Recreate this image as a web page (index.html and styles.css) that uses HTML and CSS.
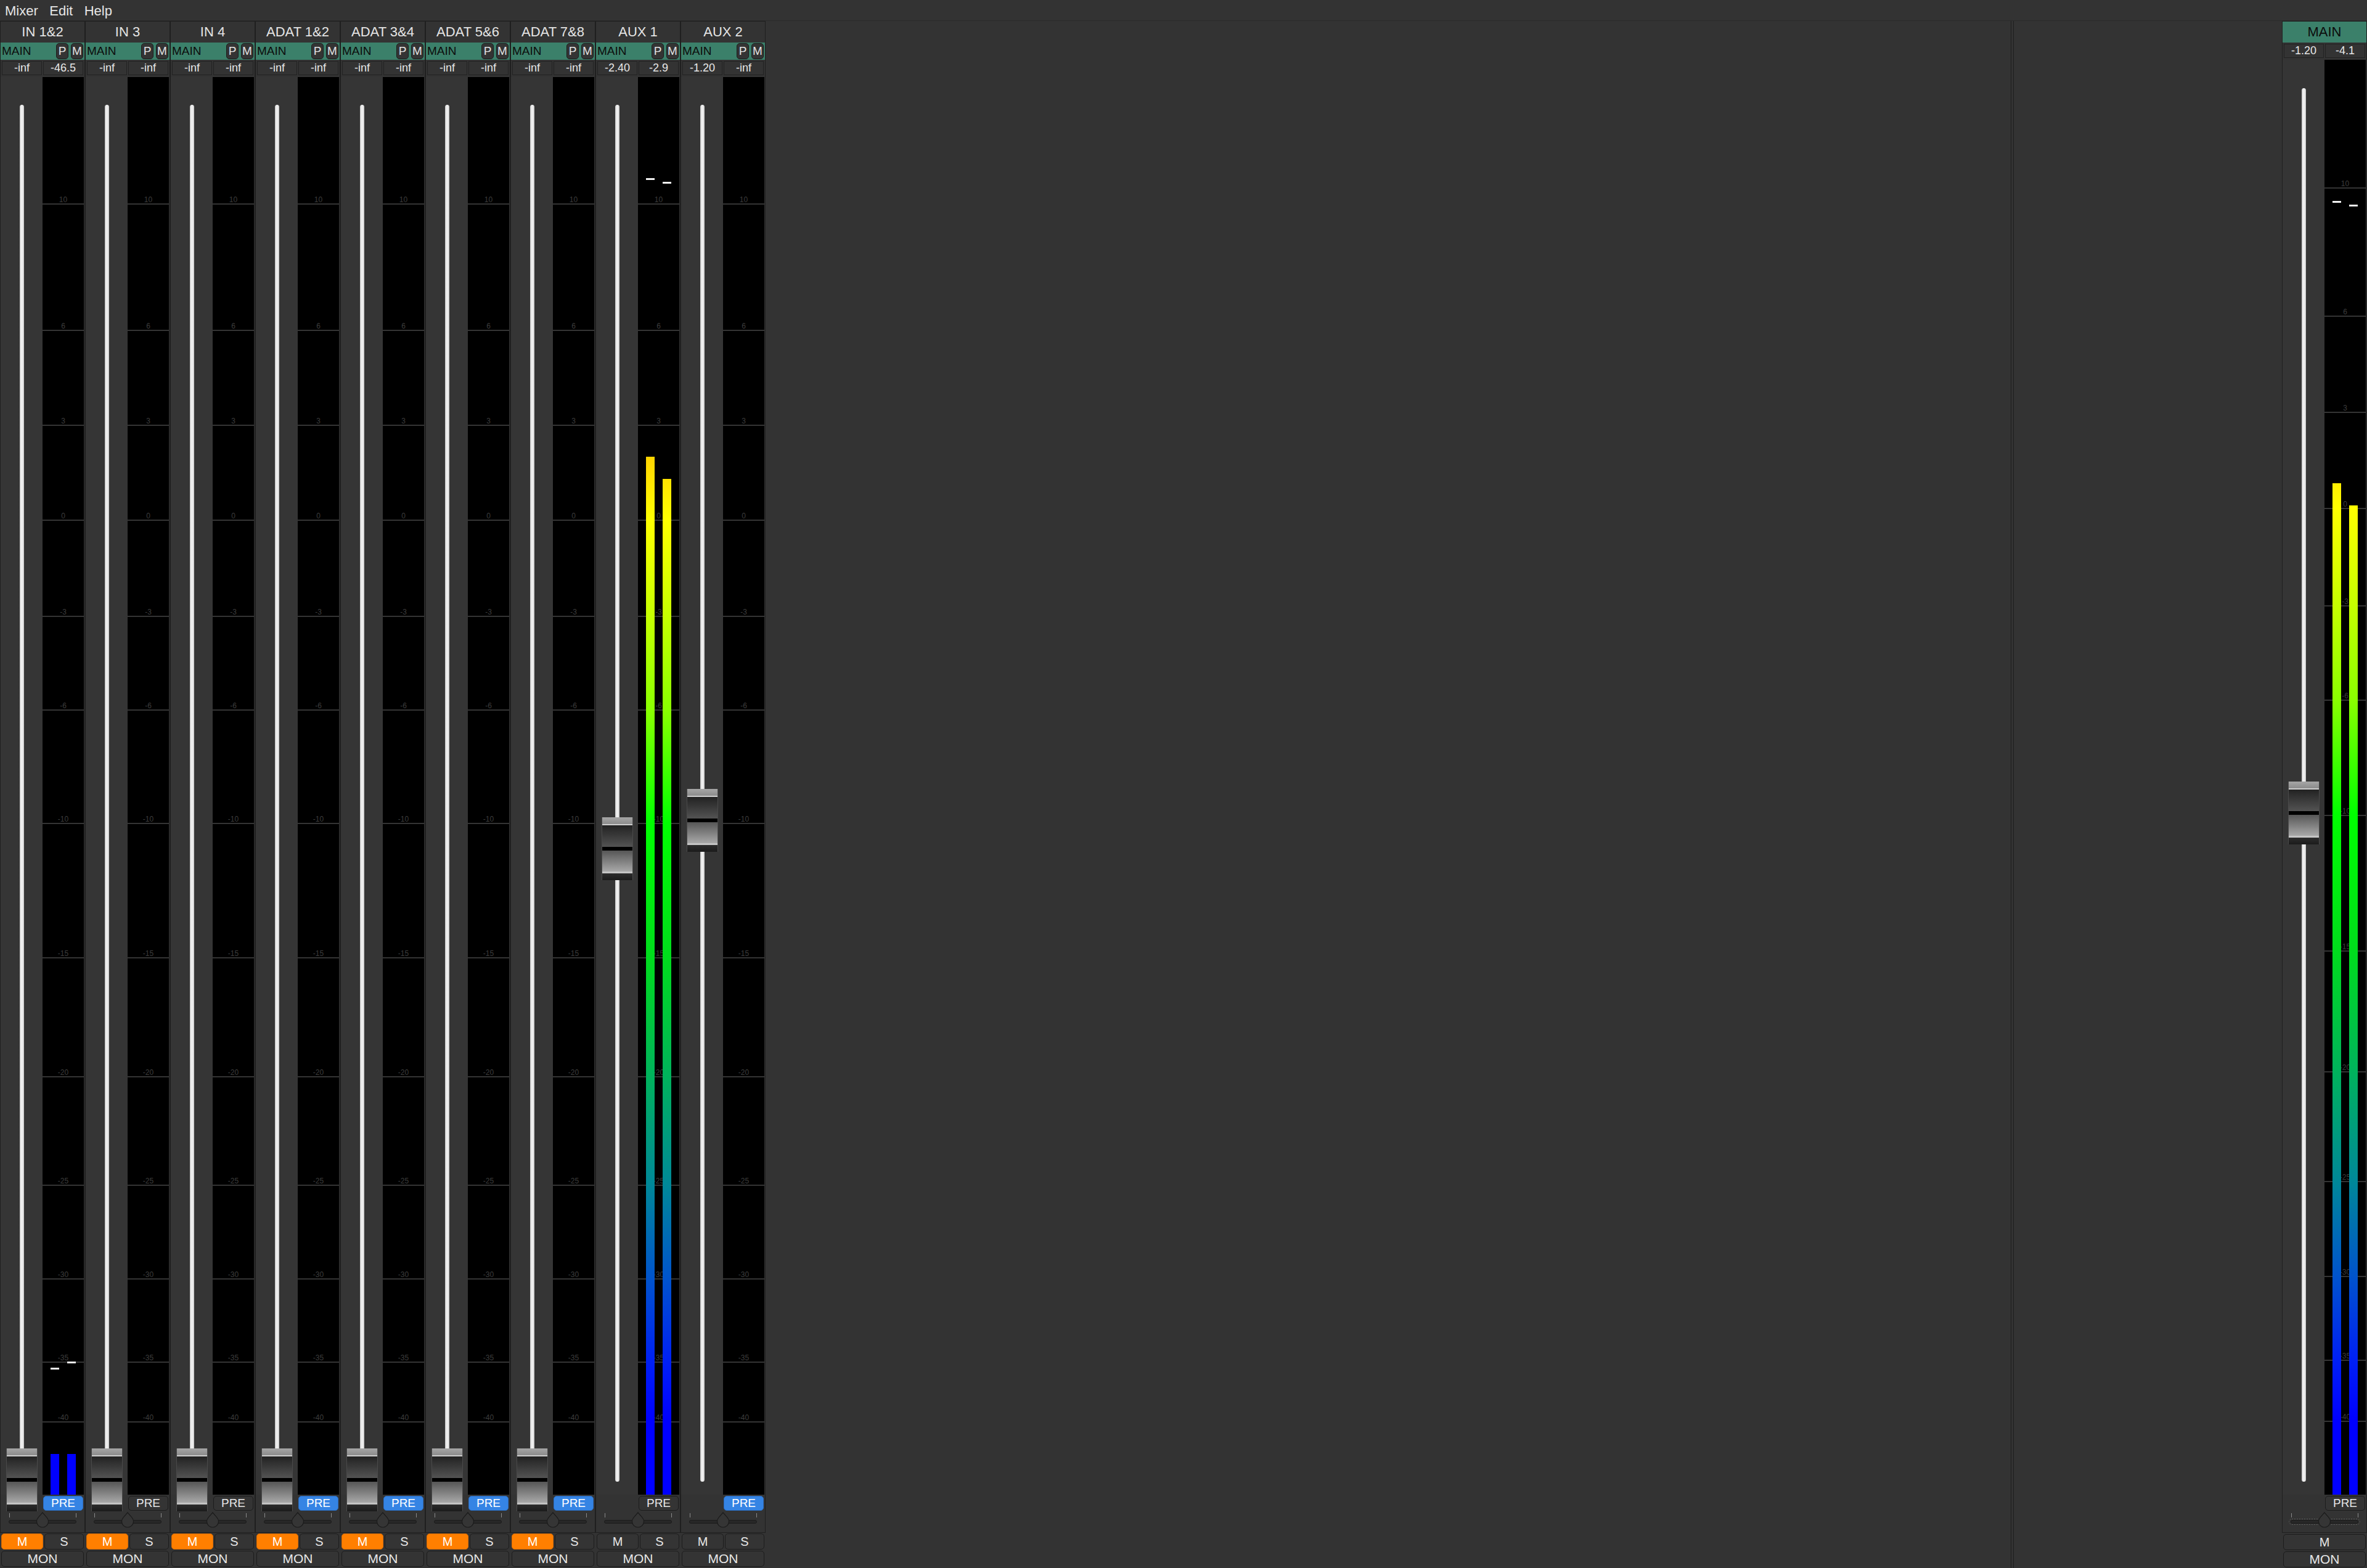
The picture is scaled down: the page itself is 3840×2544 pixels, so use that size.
FILE: index.html
```html
<!DOCTYPE html>
<html>
<head>
<meta charset="utf-8">
<title>Mixer</title>
<link rel="stylesheet" href="styles.css">
</head>
<body>
<div class="menubar"><span>Mixer</span><span>Edit</span><span>Help</span></div>
<div class="mixer">
  <div class="channels">

    <div class="strip">
      <div class="frame">
        <div class="head">IN 1&amp;2</div>
        <div class="route"><span class="dest">MAIN</span><span class="pm">P</span><span class="pm">M</span></div>
        <div class="vals"><span class="val">-inf</span><span class="val">-46.5</span></div>
        <div class="body">
          <div class="fader"><div class="track"></div><div class="handle" style="top:2225px"></div></div>
          <div class="meter">
            <div class="tk k0"><span>10</span></div><div class="tk k1"><span>6</span></div><div class="tk k2"><span>3</span></div><div class="tk k3"><span>0</span></div><div class="tk k4"><span>-3</span></div><div class="tk k5"><span>-6</span></div><div class="tk k6"><span>-10</span></div><div class="tk k7"><span>-15</span></div><div class="tk k8"><span>-20</span></div><div class="tk k9"><span>-25</span></div><div class="tk k10"><span>-30</span></div><div class="tk k11"><span>-35</span></div><div class="tk k12"><span>-40</span></div>
            <div class="bar l" style="height:66px"></div><div class="bar r" style="height:66px"></div>
            <div class="peak l" style="top:2094px"></div><div class="peak r" style="top:2084px"></div>
          </div>
        </div>
        <div class="prerow"><span class="pre on">PRE</span></div>
        <div class="pan"><svg width="136" height="34" viewBox="0 0 136 34"><rect x="14" y="3" width="1" height="7" fill="#8a8a8a"/><rect x="122" y="3" width="1" height="7" fill="#8a8a8a"/><rect x="13.5" y="14.5" width="109" height="5" rx="2.5" fill="#272727" stroke="#1b1b1b"/><path d="M68 2 L75.2 10.3 A9.5 9.5 0 1 1 60.8 10.3 Z" fill="#353535" stroke="#1b1b1b" stroke-width="1.2"/></svg></div>
      </div>
      <div class="ms"><span class="btn mute on">M</span><span class="btn solo">S</span></div>
      <div class="monrow"><span class="btn mon">MON</span></div>
    </div>

    <div class="strip">
      <div class="frame">
        <div class="head">IN 3</div>
        <div class="route"><span class="dest">MAIN</span><span class="pm">P</span><span class="pm">M</span></div>
        <div class="vals"><span class="val">-inf</span><span class="val">-inf</span></div>
        <div class="body">
          <div class="fader"><div class="track"></div><div class="handle" style="top:2225px"></div></div>
          <div class="meter">
            <div class="tk k0"><span>10</span></div><div class="tk k1"><span>6</span></div><div class="tk k2"><span>3</span></div><div class="tk k3"><span>0</span></div><div class="tk k4"><span>-3</span></div><div class="tk k5"><span>-6</span></div><div class="tk k6"><span>-10</span></div><div class="tk k7"><span>-15</span></div><div class="tk k8"><span>-20</span></div><div class="tk k9"><span>-25</span></div><div class="tk k10"><span>-30</span></div><div class="tk k11"><span>-35</span></div><div class="tk k12"><span>-40</span></div>
          </div>
        </div>
        <div class="prerow"><span class="pre">PRE</span></div>
        <div class="pan"><svg width="136" height="34" viewBox="0 0 136 34"><rect x="14" y="3" width="1" height="7" fill="#8a8a8a"/><rect x="122" y="3" width="1" height="7" fill="#8a8a8a"/><rect x="13.5" y="14.5" width="109" height="5" rx="2.5" fill="#272727" stroke="#1b1b1b"/><path d="M68 2 L75.2 10.3 A9.5 9.5 0 1 1 60.8 10.3 Z" fill="#353535" stroke="#1b1b1b" stroke-width="1.2"/></svg></div>
      </div>
      <div class="ms"><span class="btn mute on">M</span><span class="btn solo">S</span></div>
      <div class="monrow"><span class="btn mon">MON</span></div>
    </div>

    <div class="strip">
      <div class="frame">
        <div class="head">IN 4</div>
        <div class="route"><span class="dest">MAIN</span><span class="pm">P</span><span class="pm">M</span></div>
        <div class="vals"><span class="val">-inf</span><span class="val">-inf</span></div>
        <div class="body">
          <div class="fader"><div class="track"></div><div class="handle" style="top:2225px"></div></div>
          <div class="meter">
            <div class="tk k0"><span>10</span></div><div class="tk k1"><span>6</span></div><div class="tk k2"><span>3</span></div><div class="tk k3"><span>0</span></div><div class="tk k4"><span>-3</span></div><div class="tk k5"><span>-6</span></div><div class="tk k6"><span>-10</span></div><div class="tk k7"><span>-15</span></div><div class="tk k8"><span>-20</span></div><div class="tk k9"><span>-25</span></div><div class="tk k10"><span>-30</span></div><div class="tk k11"><span>-35</span></div><div class="tk k12"><span>-40</span></div>
          </div>
        </div>
        <div class="prerow"><span class="pre">PRE</span></div>
        <div class="pan"><svg width="136" height="34" viewBox="0 0 136 34"><rect x="14" y="3" width="1" height="7" fill="#8a8a8a"/><rect x="122" y="3" width="1" height="7" fill="#8a8a8a"/><rect x="13.5" y="14.5" width="109" height="5" rx="2.5" fill="#272727" stroke="#1b1b1b"/><path d="M68 2 L75.2 10.3 A9.5 9.5 0 1 1 60.8 10.3 Z" fill="#353535" stroke="#1b1b1b" stroke-width="1.2"/></svg></div>
      </div>
      <div class="ms"><span class="btn mute on">M</span><span class="btn solo">S</span></div>
      <div class="monrow"><span class="btn mon">MON</span></div>
    </div>

    <div class="strip">
      <div class="frame">
        <div class="head">ADAT 1&amp;2</div>
        <div class="route"><span class="dest">MAIN</span><span class="pm">P</span><span class="pm">M</span></div>
        <div class="vals"><span class="val">-inf</span><span class="val">-inf</span></div>
        <div class="body">
          <div class="fader"><div class="track"></div><div class="handle" style="top:2225px"></div></div>
          <div class="meter">
            <div class="tk k0"><span>10</span></div><div class="tk k1"><span>6</span></div><div class="tk k2"><span>3</span></div><div class="tk k3"><span>0</span></div><div class="tk k4"><span>-3</span></div><div class="tk k5"><span>-6</span></div><div class="tk k6"><span>-10</span></div><div class="tk k7"><span>-15</span></div><div class="tk k8"><span>-20</span></div><div class="tk k9"><span>-25</span></div><div class="tk k10"><span>-30</span></div><div class="tk k11"><span>-35</span></div><div class="tk k12"><span>-40</span></div>
          </div>
        </div>
        <div class="prerow"><span class="pre on">PRE</span></div>
        <div class="pan"><svg width="136" height="34" viewBox="0 0 136 34"><rect x="14" y="3" width="1" height="7" fill="#8a8a8a"/><rect x="122" y="3" width="1" height="7" fill="#8a8a8a"/><rect x="13.5" y="14.5" width="109" height="5" rx="2.5" fill="#272727" stroke="#1b1b1b"/><path d="M68 2 L75.2 10.3 A9.5 9.5 0 1 1 60.8 10.3 Z" fill="#353535" stroke="#1b1b1b" stroke-width="1.2"/></svg></div>
      </div>
      <div class="ms"><span class="btn mute on">M</span><span class="btn solo">S</span></div>
      <div class="monrow"><span class="btn mon">MON</span></div>
    </div>

    <div class="strip">
      <div class="frame">
        <div class="head">ADAT 3&amp;4</div>
        <div class="route"><span class="dest">MAIN</span><span class="pm">P</span><span class="pm">M</span></div>
        <div class="vals"><span class="val">-inf</span><span class="val">-inf</span></div>
        <div class="body">
          <div class="fader"><div class="track"></div><div class="handle" style="top:2225px"></div></div>
          <div class="meter">
            <div class="tk k0"><span>10</span></div><div class="tk k1"><span>6</span></div><div class="tk k2"><span>3</span></div><div class="tk k3"><span>0</span></div><div class="tk k4"><span>-3</span></div><div class="tk k5"><span>-6</span></div><div class="tk k6"><span>-10</span></div><div class="tk k7"><span>-15</span></div><div class="tk k8"><span>-20</span></div><div class="tk k9"><span>-25</span></div><div class="tk k10"><span>-30</span></div><div class="tk k11"><span>-35</span></div><div class="tk k12"><span>-40</span></div>
          </div>
        </div>
        <div class="prerow"><span class="pre on">PRE</span></div>
        <div class="pan"><svg width="136" height="34" viewBox="0 0 136 34"><rect x="14" y="3" width="1" height="7" fill="#8a8a8a"/><rect x="122" y="3" width="1" height="7" fill="#8a8a8a"/><rect x="13.5" y="14.5" width="109" height="5" rx="2.5" fill="#272727" stroke="#1b1b1b"/><path d="M68 2 L75.2 10.3 A9.5 9.5 0 1 1 60.8 10.3 Z" fill="#353535" stroke="#1b1b1b" stroke-width="1.2"/></svg></div>
      </div>
      <div class="ms"><span class="btn mute on">M</span><span class="btn solo">S</span></div>
      <div class="monrow"><span class="btn mon">MON</span></div>
    </div>

    <div class="strip">
      <div class="frame">
        <div class="head">ADAT 5&amp;6</div>
        <div class="route"><span class="dest">MAIN</span><span class="pm">P</span><span class="pm">M</span></div>
        <div class="vals"><span class="val">-inf</span><span class="val">-inf</span></div>
        <div class="body">
          <div class="fader"><div class="track"></div><div class="handle" style="top:2225px"></div></div>
          <div class="meter">
            <div class="tk k0"><span>10</span></div><div class="tk k1"><span>6</span></div><div class="tk k2"><span>3</span></div><div class="tk k3"><span>0</span></div><div class="tk k4"><span>-3</span></div><div class="tk k5"><span>-6</span></div><div class="tk k6"><span>-10</span></div><div class="tk k7"><span>-15</span></div><div class="tk k8"><span>-20</span></div><div class="tk k9"><span>-25</span></div><div class="tk k10"><span>-30</span></div><div class="tk k11"><span>-35</span></div><div class="tk k12"><span>-40</span></div>
          </div>
        </div>
        <div class="prerow"><span class="pre on">PRE</span></div>
        <div class="pan"><svg width="136" height="34" viewBox="0 0 136 34"><rect x="14" y="3" width="1" height="7" fill="#8a8a8a"/><rect x="122" y="3" width="1" height="7" fill="#8a8a8a"/><rect x="13.5" y="14.5" width="109" height="5" rx="2.5" fill="#272727" stroke="#1b1b1b"/><path d="M68 2 L75.2 10.3 A9.5 9.5 0 1 1 60.8 10.3 Z" fill="#353535" stroke="#1b1b1b" stroke-width="1.2"/></svg></div>
      </div>
      <div class="ms"><span class="btn mute on">M</span><span class="btn solo">S</span></div>
      <div class="monrow"><span class="btn mon">MON</span></div>
    </div>

    <div class="strip">
      <div class="frame">
        <div class="head">ADAT 7&amp;8</div>
        <div class="route"><span class="dest">MAIN</span><span class="pm">P</span><span class="pm">M</span></div>
        <div class="vals"><span class="val">-inf</span><span class="val">-inf</span></div>
        <div class="body">
          <div class="fader"><div class="track"></div><div class="handle" style="top:2225px"></div></div>
          <div class="meter">
            <div class="tk k0"><span>10</span></div><div class="tk k1"><span>6</span></div><div class="tk k2"><span>3</span></div><div class="tk k3"><span>0</span></div><div class="tk k4"><span>-3</span></div><div class="tk k5"><span>-6</span></div><div class="tk k6"><span>-10</span></div><div class="tk k7"><span>-15</span></div><div class="tk k8"><span>-20</span></div><div class="tk k9"><span>-25</span></div><div class="tk k10"><span>-30</span></div><div class="tk k11"><span>-35</span></div><div class="tk k12"><span>-40</span></div>
          </div>
        </div>
        <div class="prerow"><span class="pre on">PRE</span></div>
        <div class="pan"><svg width="136" height="34" viewBox="0 0 136 34"><rect x="14" y="3" width="1" height="7" fill="#8a8a8a"/><rect x="122" y="3" width="1" height="7" fill="#8a8a8a"/><rect x="13.5" y="14.5" width="109" height="5" rx="2.5" fill="#272727" stroke="#1b1b1b"/><path d="M68 2 L75.2 10.3 A9.5 9.5 0 1 1 60.8 10.3 Z" fill="#353535" stroke="#1b1b1b" stroke-width="1.2"/></svg></div>
      </div>
      <div class="ms"><span class="btn mute on">M</span><span class="btn solo">S</span></div>
      <div class="monrow"><span class="btn mon">MON</span></div>
    </div>

    <div class="strip">
      <div class="frame">
        <div class="head">AUX 1</div>
        <div class="route"><span class="dest">MAIN</span><span class="pm">P</span><span class="pm">M</span></div>
        <div class="vals"><span class="val">-2.40</span><span class="val">-2.9</span></div>
        <div class="body">
          <div class="fader"><div class="track"></div><div class="handle" style="top:1201px"></div></div>
          <div class="meter">
            <div class="tk k0"><span>10</span></div><div class="tk k1"><span>6</span></div><div class="tk k2"><span>3</span></div><div class="tk k3"><span>0</span></div><div class="tk k4"><span>-3</span></div><div class="tk k5"><span>-6</span></div><div class="tk k6"><span>-10</span></div><div class="tk k7"><span>-15</span></div><div class="tk k8"><span>-20</span></div><div class="tk k9"><span>-25</span></div><div class="tk k10"><span>-30</span></div><div class="tk k11"><span>-35</span></div><div class="tk k12"><span>-40</span></div>
            <div class="bar l" style="height:1684px"></div><div class="bar r" style="height:1648px"></div>
            <div class="peak l" style="top:164px"></div><div class="peak r" style="top:170px"></div>
          </div>
        </div>
        <div class="prerow"><span class="pre">PRE</span></div>
        <div class="pan"><svg width="136" height="34" viewBox="0 0 136 34"><rect x="14" y="3" width="1" height="7" fill="#8a8a8a"/><rect x="122" y="3" width="1" height="7" fill="#8a8a8a"/><rect x="13.5" y="14.5" width="109" height="5" rx="2.5" fill="#272727" stroke="#1b1b1b"/><path d="M68 2 L75.2 10.3 A9.5 9.5 0 1 1 60.8 10.3 Z" fill="#353535" stroke="#1b1b1b" stroke-width="1.2"/></svg></div>
      </div>
      <div class="ms"><span class="btn mute">M</span><span class="btn solo">S</span></div>
      <div class="monrow"><span class="btn mon">MON</span></div>
    </div>

    <div class="strip">
      <div class="frame">
        <div class="head">AUX 2</div>
        <div class="route"><span class="dest">MAIN</span><span class="pm">P</span><span class="pm">M</span></div>
        <div class="vals"><span class="val">-1.20</span><span class="val">-inf</span></div>
        <div class="body">
          <div class="fader"><div class="track"></div><div class="handle" style="top:1155px"></div></div>
          <div class="meter">
            <div class="tk k0"><span>10</span></div><div class="tk k1"><span>6</span></div><div class="tk k2"><span>3</span></div><div class="tk k3"><span>0</span></div><div class="tk k4"><span>-3</span></div><div class="tk k5"><span>-6</span></div><div class="tk k6"><span>-10</span></div><div class="tk k7"><span>-15</span></div><div class="tk k8"><span>-20</span></div><div class="tk k9"><span>-25</span></div><div class="tk k10"><span>-30</span></div><div class="tk k11"><span>-35</span></div><div class="tk k12"><span>-40</span></div>
          </div>
        </div>
        <div class="prerow"><span class="pre on">PRE</span></div>
        <div class="pan"><svg width="136" height="34" viewBox="0 0 136 34"><rect x="14" y="3" width="1" height="7" fill="#8a8a8a"/><rect x="122" y="3" width="1" height="7" fill="#8a8a8a"/><rect x="13.5" y="14.5" width="109" height="5" rx="2.5" fill="#272727" stroke="#1b1b1b"/><path d="M68 2 L75.2 10.3 A9.5 9.5 0 1 1 60.8 10.3 Z" fill="#353535" stroke="#1b1b1b" stroke-width="1.2"/></svg></div>
      </div>
      <div class="ms"><span class="btn mute">M</span><span class="btn solo">S</span></div>
      <div class="monrow"><span class="btn mon">MON</span></div>
    </div>

  </div>
  <div class="splitter"></div>
  <div class="masterpane">
    <div class="strip master">
      <div class="frame">
        <div class="head green">MAIN</div>
        <div class="vals"><span class="val">-1.20</span><span class="val">-4.1</span></div>
        <div class="body">
          <div class="fader"><div class="track"></div><div class="handle" style="top:1171px"></div></div>
          <div class="meter">
            <div class="tk k0"><span>10</span></div><div class="tk k1"><span>6</span></div><div class="tk k2"><span>3</span></div><div class="tk k3"><span>0</span></div><div class="tk k4"><span>-3</span></div><div class="tk k5"><span>-6</span></div><div class="tk k6"><span>-10</span></div><div class="tk k7"><span>-15</span></div><div class="tk k8"><span>-20</span></div><div class="tk k9"><span>-25</span></div><div class="tk k10"><span>-30</span></div><div class="tk k11"><span>-35</span></div><div class="tk k12"><span>-40</span></div>
            <div class="bar l" style="height:1641px"></div><div class="bar r" style="height:1605px"></div>
            <div class="peak l" style="top:229px"></div><div class="peak r" style="top:235px"></div>
          </div>
        </div>
        <div class="prerow"><span class="pre">PRE</span></div>
        <div class="pan"><svg width="136" height="34" viewBox="0 0 136 34"><rect x="14" y="3" width="1" height="7" fill="#8a8a8a"/><rect x="122" y="3" width="1" height="7" fill="#8a8a8a"/><rect x="10.5" y="12.5" width="115" height="9" rx="4.5" fill="none" stroke="#5c5c5c" stroke-dasharray="2 2"/><rect x="13.5" y="14.5" width="109" height="5" rx="2.5" fill="#272727" stroke="#1b1b1b"/><path d="M68 2 L75.2 10.3 A9.5 9.5 0 1 1 60.8 10.3 Z" fill="#353535" stroke="#1b1b1b" stroke-width="1.2"/></svg></div>
      </div>
      <div class="monrow"><span class="btn mon mm">M</span></div>
      <div class="monrow"><span class="btn mon">MON</span></div>
    </div>
  </div>
</div>
</body>
</html>
```

FILE: styles.css
```css
html, body {
  margin: 0;
  padding: 0;
}
body {
  background: #333333;
  width: 3840px;
  height: 2544px;
  overflow: hidden;
  font-family: "Liberation Sans", Arial, sans-serif;
  color: #e8e8e8;
}
.menubar {
  height: 33px;
  border-bottom: 1px solid #2a2a2a;
  display: flex;
  padding-left: 8px;
  font-size: 22px;
  line-height: 35px;
  color: #e6e6e6;
}
.menubar span {
  margin-right: 18.5px;
}
.mixer {
  display: flex;
  height: 2510px;
}
.channels {
  display: flex;
  width: 3262px;
  flex: none;
}
.splitter {
  width: 3px;
  flex: none;
  border-left: 1px solid #1e1e1e;
  border-right: 1px solid #1e1e1e;
}
.masterpane {
  flex: 1;
  display: flex;
  justify-content: flex-end;
}
.strip {
  width: 138px;
  flex: none;
  display: flex;
  flex-direction: column;
}
.frame {
  height: 2453px;
  box-sizing: border-box;
  border: 1px solid #1f1f1f;
  display: flex;
  flex-direction: column;
  background: #333333;
}
.head {
  height: 34px;
  flex: none;
  line-height: 34px;
  text-align: center;
  font-size: 22px;
  color: #e4e4e4;
}
.head.green {
  background: #3b806a;
  color: #0c0c0c;
}
.route {
  height: 28px;
  flex: none;
  background: #3b806a;
  display: flex;
  align-items: center;
  padding: 0 2px 0 2px;
}
.dest {
  flex: 1;
  color: #0c0c0c;
  font-size: 19px;
}
.pm {
  width: 20px;
  height: 26px;
  box-sizing: border-box;
  border: 1px solid #1c1c1c;
  border-radius: 5px;
  background: #343434;
  color: #e2e2e2;
  font-size: 19px;
  line-height: 24px;
  text-align: center;
  margin-left: 4px;
}
.vals {
  height: 28px;
  flex: none;
  box-sizing: border-box;
  display: flex;
  gap: 2px;
  padding: 2px 2px 0 2px;
}
.val {
  width: 65px;
  height: 23px;
  box-sizing: border-box;
  border: 1px solid #222222;
  font-size: 18px;
  line-height: 21px;
  text-align: center;
  color: #e8e8e8;
}
.body {
  height: 2300px;
  flex: none;
  display: flex;
  position: relative;
  z-index: 1;
}
.master .body {
  height: 2328px;
}
.fader {
  width: 68px;
  flex: none;
  position: relative;
  background: #353535;
}
.track {
  position: absolute;
  left: 31px;
  width: 7px;
  top: 45px;
  bottom: 21px;
  border-radius: 4px;
  background: linear-gradient(to right, #c4c4c4, #efefef 35%, #efefef 65%, #c4c4c4);
}
.master .track {
  top: 46px;
}
.handle {
  position: absolute;
  left: 9px;
  width: 51px;
  height: 102px;
  box-sizing: border-box;
  border-left: 1px solid #4a4a4a;
  border-right: 1px solid #4a4a4a;
  background: linear-gradient(to bottom,
    #a6a6a6 0, #8c8c8c 11px,
    #cdcdcd 11px, #cdcdcd 13px,
    #222222 13px, #535353 48px,
    #000000 48px, #000000 54px,
    #565656 54px, #a8a8a8 88px,
    #c4c4c4 88px, #c4c4c4 91px,
    #2c2c2c 91px, #1b1b1b 102px);
}
.meter {
  --mh: 2300px;
  width: 67px;
  flex: none;
  position: relative;
  background: #000000;
}
.master .meter {
  --mh: 2328px;
}
.tk {
  position: absolute;
  left: 0;
  right: 0;
  height: 2px;
  background: #343434;
}
.tk span {
  position: absolute;
  bottom: 100%;
  left: 0;
  right: 0;
  text-align: center;
  font-size: 12px;
  line-height: 12px;
  color: #3d3d3d;
}
.k0 { top: 8.913%; }
.k1 { top: 17.826%; }
.k2 { top: 24.522%; }
.k3 { top: 31.217%; }
.k4 { top: 38%; }
.k5 { top: 44.609%; }
.k6 { top: 52.609%; }
.k7 { top: 62.087%; }
.k8 { top: 70.478%; }
.k9 { top: 78.13%; }
.k10 { top: 84.739%; }
.k11 { top: 90.609%; }
.k12 { top: 94.826%; }
.bar {
  position: absolute;
  bottom: 0;
  width: 14px;
  background-image: linear-gradient(to bottom,
    #ff0000 0%, #ff7000 14%, #ffd400 26.8%, #ffff00 31.2%,
    #c6ff00 38%, #8aff00 44.6%, #00ff00 52.6%, #00dc1c 62%,
    #00b25c 70.5%, #008898 78.1%, #0054cc 84.7%, #0020f4 90.6%,
    #0000ff 94.8%, #0000ff 100%);
  background-size: 14px var(--mh);
  background-position: 0 100%;
  background-repeat: no-repeat;
}
.bar.l, .peak.l { left: 13px; }
.bar.r, .peak.r { left: 40px; }
.peak {
  position: absolute;
  width: 14px;
  height: 3px;
  background: #f2f2f2;
}
.prerow {
  height: 27px;
  flex: none;
  box-sizing: border-box;
  display: flex;
  justify-content: flex-end;
  padding: 2px 2px 0 0;
}
.pre {
  width: 65px;
  height: 24px;
  box-sizing: border-box;
  border: 1px solid #1c1c1c;
  border-radius: 5px;
  background: #343434;
  color: #e6e6e6;
  font-size: 19px;
  line-height: 22px;
  text-align: center;
}
.pre.on {
  background: #3584e4;
  border-color: #2b6cc0;
  color: #ffffff;
}
.pan {
  height: 34px;
  flex: none;
}
.pan svg {
  display: block;
}
.ms {
  display: flex;
  gap: 2px;
  padding: 0 2px;
  margin-top: 1px;
}
.monrow {
  display: flex;
  padding: 0 2px;
  margin-top: 2px;
}
.master .monrow:first-of-type {
  margin-top: 1px;
}
.btn {
  height: 26px;
  box-sizing: border-box;
  border: 1px solid #1c1c1c;
  border-radius: 5px;
  background: #343434;
  color: #e8e8e8;
  font-size: 20px;
  line-height: 24px;
  text-align: center;
}
.mute {
  width: 68px;
  flex: none;
}
.mute.on {
  background: #ff7f00;
  border-color: #d96a00;
  color: #ffffff;
}
.solo {
  flex: 1;
}
.mon {
  flex: 1;
  font-size: 21px;
}
.mon.mm {
  font-size: 20px;
}
```
